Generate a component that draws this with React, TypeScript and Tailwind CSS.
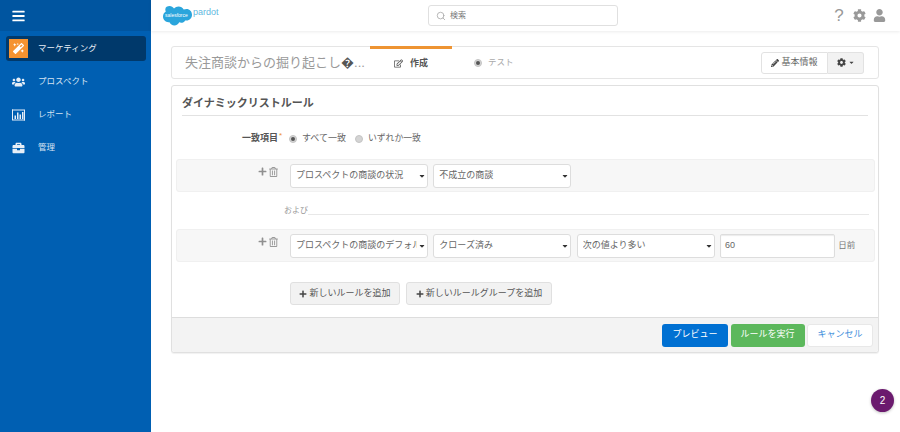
import {
  FaBars,
  FaBriefcase,
  FaCaretDown,
  FaCog,
  FaMagic,
  FaPencilAlt,
  FaPlus,
  FaRegEdit,
  FaRegTrashAlt,
  FaUser,
  FaUsers,
} from "react-icons/fa";
import { Search } from "lucide-react";

const ReportIcon = ({ className }: { className?: string }) => (
  <svg className={className} viewBox="0 0 13 11" fill="currentColor">
    <path d="M0 0h1v10h12v1H0z" />
    <path d="M0 0h13v11h-1V1H0z" />
    <rect x="2.500" y="6" width="1.500" height="3.500" />
    <rect x="5" y="3" width="1.500" height="6.500" />
    <rect x="7.500" y="5" width="1.500" height="4.500" />
    <rect x="10" y="2.500" width="1.500" height="7" />
  </svg>
);

const Select = ({ label }: { label: string }) => (
  <div className="w-[138px] h-[24px] flex items-center bg-white border border-[#dddddd] rounded-[3px] pl-[5px] pr-[1px] pt-px shrink-0">
    <span className="flex-1 overflow-hidden whitespace-nowrap text-[#666666]">{label}</span>
    <FaCaretDown className="w-[8px] h-[8px] ml-[1px] text-[#333333] shrink-0" />
  </div>
);

const Radio = ({ on }: { on?: boolean }) => (
  <span className="w-[8px] h-[8px] rounded-full bg-[#d4d4d4] border border-[#c4c4c4] flex items-center justify-center">
    {on && <span className="w-[4px] h-[4px] rounded-full bg-[#555555]" />}
  </span>
);

const RuleRow = ({ children }: { children: React.ReactNode }) => (
  <div className="h-[33px] ml-[4px] mr-[3px] flex items-center bg-[#f7f7f7] border border-[#f0f0f0] rounded-[3px]">
    <div className="w-[113px] flex justify-end gap-[2px] pr-[12px] pb-[7px] text-[#999999] shrink-0">
      <FaPlus className="w-[9px] h-[9px] text-[#8f8f8f]" />
      <FaRegTrashAlt className="w-[9px] h-[10px]" />
    </div>
    <div className="flex items-center gap-[5.330px]">{children}</div>
  </div>
);

const navItems = [
  { label: "プロスペクト", Icon: FaUsers },
  { label: "レポート", Icon: ReportIcon },
  { label: "管理", Icon: FaBriefcase },
];

export default function App() {
  return (
    <div
      className="relative w-[900px] h-[432px] flex overflow-hidden bg-white text-[9px] text-[#666666]"
      style={{ fontFamily: '"Liberation Sans", "Noto Sans CJK JP", sans-serif' }}
    >
      {/* SIDEBAR */}
      <aside className="w-[151px] shrink-0 bg-[#005fb2] text-white text-[8.500px]">
        <div className="h-[31px] bg-[#0055a0] flex items-center pl-[12px]">
          <FaBars className="w-[13px] h-[14px]" />
        </div>
        <div className="ml-[6px] mr-[5px] mt-[5px] h-[25px] flex items-center bg-[#00396b] rounded-[3px] pl-[3px]">
          <span className="w-[19px] h-[19px] bg-[#f59331] flex items-center justify-center">
            <FaMagic className="w-[11px] h-[11px]" />
          </span>
          <span className="ml-[10px] text-[#e8eef5]">マーケティング</span>
        </div>
        <div className="mt-[11px] flex flex-col gap-[14px] pl-[12px]">
          {navItems.map(({ label, Icon }) => (
            <div key={label} className="h-[19px] flex items-center text-[#d5e3f2]">
              <Icon className="w-[13px] h-[12px] text-[#e6eef7]" />
              <span className="ml-[13px]">{label}</span>
            </div>
          ))}
        </div>
      </aside>

      <div className="flex-1 min-w-0">
        {/* HEADER */}
        <header className="h-[31px] flex items-center shadow-[0_1px_3px_rgba(0,0,0,0.08)]">
          <div className="w-[277px] pl-[10px] flex items-center shrink-0">
            <svg width="31" height="22" viewBox="0 0 31 22">
              <path
                d="M13 3.500C14.200 2.200 15.800 1.500 17.500 1.500c2.200 0 4.200 1.200 5.200 3 .9-.4 1.800-.6 2.800-.6 3.200 0 5.500 2.600 5.500 5.800s-2.300 5.800-5.500 5.800h-1.300c-.8 1.400-2.300 2.300-4 2.300-.7 0-1.400-.2-2-.5-.8 1.900-2.600 3.200-4.800 3.200-2.200 0-4.100-1.400-4.900-3.300-.4.100-.7.100-1.100.1C4.600 17.300 2 14.800 2 11.600c0-2.100 1.100-4 2.800-5C4.400 5.800 4.300 5 4.300 4.400 4.300 2 6.500 1 8.600 1c1.800 0 3.400 1 4.400 2.500z"
                fill="#2aa5dc"
              />
              <text x="4" y="12" fontSize="5" fill="#ffffff">salesforce</text>
            </svg>
            <span className="ml-[1px] -mt-[5px] text-[9px] text-[#5fb8e0]">pardot</span>
          </div>
          <div className="w-[190px] h-[21px] flex items-center border border-[#e0e0e0] rounded-[3px] pl-[7px] text-[#777777]">
            <Search className="w-[10px] h-[10px] text-[#aaaaaa]" />
            <span className="ml-[4px] text-[8px]">検索</span>
          </div>
          <div className="ml-auto flex items-center pr-[14px] text-[#999999]">
            <span className="w-[10px] text-center text-[17px] leading-[17px]">?</span>
            <FaCog className="w-[13px] h-[13px] ml-[9px]" />
            <FaUser className="w-[13px] h-[13px] ml-[7px]" />
          </div>
        </header>

        {/* TITLE BAR */}
        <div className="ml-[20px] mr-[21px] mt-[15px] h-[33px] flex items-center bg-white border border-[#e5e5e5] rounded-[3px] overflow-visible">
          <div className="w-[198px] pl-[13px] text-[13px] text-[#9a9a9a] whitespace-nowrap shrink-0">
            失注商談からの掘り起こし<span className="text-[#555555]">�</span>...
          </div>
          <div className="w-[82px] h-[33px] -mt-px flex items-center justify-center border-t-[3px] border-[#ee9432] text-[#555555] font-bold shrink-0">
            <FaRegEdit className="w-[9px] h-[9px] mr-[7px]" />
            作成
          </div>
          <div className="ml-[22px] flex items-center text-[8.500px] text-[#aaaaaa]">
            <span className="mr-[6px]"><Radio on /></span>
            テスト
          </div>
          <div className="ml-auto mr-[14px] flex h-[22px]">
            <div className="w-[67px] flex items-center justify-center border border-[#e2e2e2] rounded-l-[3px] text-[#666666]">
              <FaPencilAlt className="w-[8px] h-[8px] text-[#444444] mr-[2px]" />
              基本情報
            </div>
            <div className="w-[36px] flex items-center justify-center gap-[2px] bg-[#f2f2f2] border border-l-0 border-[#e2e2e2] rounded-r-[3px] text-[#444444]">
              <FaCog className="w-[9px] h-[9px]" />
              <FaCaretDown className="w-[7px] h-[7px]" />
            </div>
          </div>
        </div>

        {/* RULE PANEL */}
        <div className="ml-[20px] mr-[21px] mt-[6px] h-[268px] flex flex-col bg-white border border-[#e0e0e0] rounded-[3px] shadow-[0_1px_1px_rgba(0,0,0,0.06)]">
          <h2 className="mx-[10px] h-[30px] pt-[9px] text-[11px] font-bold text-[#555555] border-b border-[#e2e2e2]">
            ダイナミックリストルール
          </h2>

          <div className="mt-[17px] h-[12px] flex items-center">
            <span className="w-[106px] text-right font-bold text-[#555555] shrink-0 relative">
              一致項目
              <span className="absolute -right-[4px] -top-[2px] text-[#ee9432] font-normal text-[8px]">*</span>
            </span>
            <span className="ml-[11px]"><Radio on /></span>
            <span className="ml-[5px]">すべて一致</span>
            <span className="ml-[9px]"><Radio /></span>
            <span className="ml-[5px] text-[8.800px]">いずれか一致</span>
          </div>

          <div className="mt-[14px]">
            <RuleRow>
              <Select label="プロスペクトの商談の状況" />
              <Select label="不成立の商談" />
            </RuleRow>
          </div>

          <div className="mt-[14px] ml-[112px] mr-[9px] flex items-start h-[10px] text-[8px] text-[#999999]">
            <span className="leading-[10px]">および</span>
            <span className="flex-1 mt-[8px] border-b border-[#e8e8e8]" />
          </div>

          <div className="mt-[13px]">
            <RuleRow>
              <Select label="プロスペクトの商談のデフォルト" />
              <Select label="クローズ済み" />
              <Select label="次の値より多い" />
              <div className="w-[115px] h-[24px] flex items-center bg-white border border-[#dddddd] rounded-[2px] pl-[4px] shadow-[inset_0_1px_1px_rgba(0,0,0,0.08)] text-[#666666]">
                60
              </div>
              <span className="ml-[-2px] text-[8.500px] text-[#777777]">日前</span>
            </RuleRow>
          </div>

          <div className="mt-[20px] ml-[118px] flex gap-[6px]">
            <button className="w-[110px] h-[23px] flex items-center justify-center bg-[#f2f2f2] border border-[#e0e0e0] rounded-[3px] text-[#555555]">
              <FaPlus className="w-[8px] h-[8px] text-[#444444] mr-[2px]" />
              新しいルールを追加
            </button>
            <button className="w-[146px] h-[23px] flex items-center justify-center bg-[#f2f2f2] border border-[#e0e0e0] rounded-[3px] text-[#555555]">
              <FaPlus className="w-[8px] h-[8px] text-[#444444] mr-[2px]" />
              新しいルールグループを追加
            </button>
          </div>

          <div className="mt-auto h-[35px] flex items-center justify-end gap-[2.500px] pr-[5px] bg-[#f3f3f3] border-t border-[#dddddd] rounded-b-[3px]">
            <button className="w-[66px] h-[23px] bg-[#0070d2] rounded-[3px] text-white">プレビュー</button>
            <button className="w-[74px] h-[23px] bg-[#5cb85c] rounded-[3px] text-white">ルールを実行</button>
            <button className="w-[66px] h-[23px] bg-white border border-[#e8e8e8] rounded-[3px] text-[#3f8fdc]">キャンセル</button>
          </div>
        </div>
      </div>

      {/* NOTIFICATION BADGE */}
      <div className="absolute left-[871px] top-[389px] w-[23px] h-[23px] flex items-center justify-center rounded-full bg-[#6b1a6e] text-white text-[10px] shadow-[0_1px_3px_rgba(0,0,0,0.25)]">
        2
      </div>
    </div>
  );
}
